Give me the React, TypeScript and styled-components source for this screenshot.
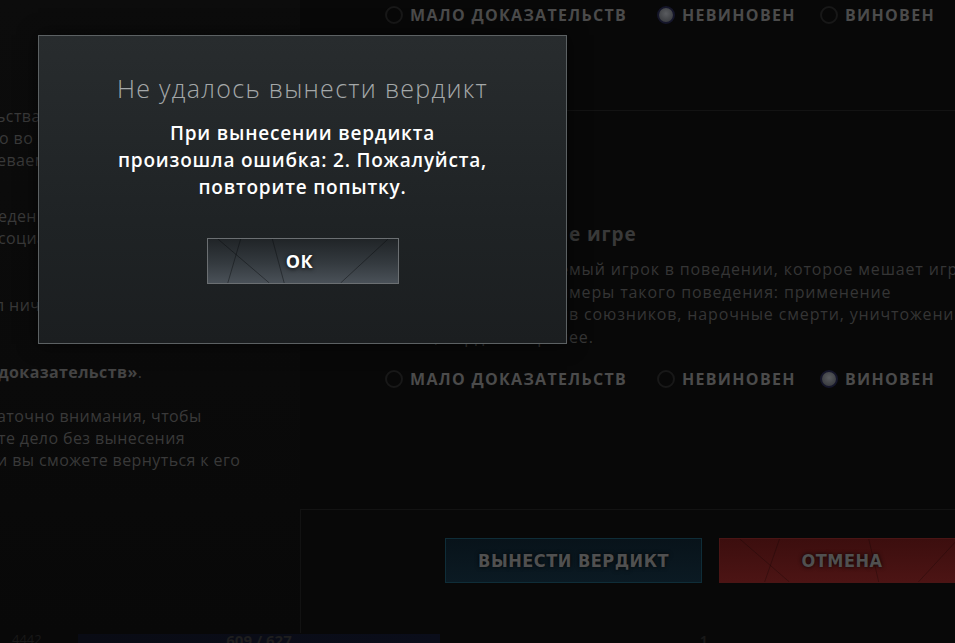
import React from 'react';
import styled, { createGlobalStyle } from 'styled-components';

const GlobalStyle = createGlobalStyle`
  html, body {
    margin: 0;
    padding: 0;
    background: #080808;
  }
`;

const Page = styled.div`
  position: relative;
  width: 955px;
  height: 643px;
  overflow: hidden;
  display: flex;
  flex-direction: column;
  background: #080808;
  font-family: "Open Sans", "Noto Sans", sans-serif;
`;

const Main = styled.div`
  display: flex;
  height: 633px;
  flex-shrink: 0;
`;

const LeftColumn = styled.div`
  width: 300px;
  flex-shrink: 0;
  padding-top: 105px;
  box-sizing: border-box;
  overflow: hidden;
  background: linear-gradient(180deg, #0c0c0c 0%, #0a0a0a 60%, #080808 100%);
`;

const LeftParagraph = styled.div<{ space: number }>`
  margin-top: ${({ space }) => space}px;
  font-size: 16px;
  line-height: 22px;
  letter-spacing: 0.4px;
  color: #393939;
  white-space: nowrap;
`;

const LeftLine = styled.div<{ shift: number }>`
  margin-left: ${({ shift }) => shift}px;
`;

const Strong = styled.b`
  font-weight: 700;
  color: #444;
`;

const RightColumn = styled.div`
  flex: 1;
  display: flex;
  flex-direction: column;
  min-width: 0;
`;

const RadioRow = styled.div<{ space: number }>`
  display: flex;
  align-items: center;
  height: 30px;
  margin-top: ${({ space }) => space}px;
  padding-left: 85px;
`;

const RadioItem = styled.div<{ width: number }>`
  display: flex;
  align-items: center;
  width: ${({ width }) => width}px;
  flex-shrink: 0;
`;

const RadioCircle = styled.span<{ checked?: boolean }>`
  width: 18px;
  height: 18px;
  border-radius: 50%;
  box-sizing: border-box;
  margin-right: 7px;
  border: 2px solid ${({ checked }) => (checked ? '#15162a' : '#181818')};
  background: ${({ checked }) =>
    checked ? 'radial-gradient(circle at 50% 40%, #5a5c60 0%, #3d3f43 70%)' : 'transparent'};
`;

const RadioLabel = styled.span`
  font-size: 16px;
  font-weight: 700;
  letter-spacing: 1.3px;
  color: #4b4b4b;
  white-space: nowrap;
`;

const Divider = styled.div<{ space: number }>`
  height: 1px;
  margin-top: ${({ space }) => space}px;
  background: #131313;
  flex-shrink: 0;
`;

const Question = styled.div`
  margin-top: 109px;
  padding-left: 85px;
  white-space: nowrap;
`;

const QuestionTitle = styled.div`
  display: flex;
  font-size: 19px;
  font-weight: 700;
  line-height: 28px;
  letter-spacing: 0.9px;
  color: #393939;
`;

const QuestionText = styled.div`
  margin-top: 10px;
  font-size: 16px;
  line-height: 22.7px;
  color: #353535;
  letter-spacing: 0.85px;
`;

const QuestionLine = styled.div`
  display: flex;
`;

/* start of each line, kept under the dialog */
const Lead = styled.span`
  width: 184px;
  flex-shrink: 0;
  display: flex;
  justify-content: flex-end;
  overflow: hidden;
`;

const Footer = styled.div`
  flex: 1;
  border-left: 1px solid #121212;
  padding-top: 28px;
  padding-left: 144px;
  display: flex;
  align-items: flex-start;
  gap: 17px;
`;

const VerdictButton = styled.button<{ tone: 'blue' | 'red'; width: number }>`
  position: relative;
  flex-shrink: 0;
  width: ${({ width }) => width}px;
  height: 45px;
  box-sizing: border-box;
  overflow: hidden;
  border: 1px solid ${({ tone }) => (tone === 'blue' ? '#0f2d38' : '#4a1515')};
  background: ${({ tone }) =>
    tone === 'blue'
      ? 'linear-gradient(180deg, #08131a 0%, #0b1a23 100%)'
      : 'linear-gradient(180deg, #3c0e0e 0%, #4c1414 100%)'};
  font-family: "DejaVu Sans Condensed", "DejaVu Sans", sans-serif;
  font-size: 18px;
  font-weight: 700;
  letter-spacing: 0.5px;
  color: #505050;
  text-shadow: 0 0 4px rgba(0, 0, 0, 0.9);
  padding: 0;
`;

const ButtonLabel = styled.span`
  position: relative;
`;

const Streaks = styled.svg`
  position: absolute;
  inset: 0;
  width: 100%;
  height: 100%;
`;

const BottomStrip = styled.div`
  display: flex;
  align-items: flex-start;
  height: 30px;
  flex-shrink: 0;
  padding-left: 12px;
  font-size: 13px;
  color: #181818;
`;

const Counter = styled.span`
  width: 66px;
  line-height: 12px;
`;

const ProgressTrack = styled.div`
  width: 362px;
  height: 14px;
  margin-top: 1px;
  background: linear-gradient(90deg, #090b14 0%, #0a0d1a 100%);
  display: flex;
  justify-content: center;
  font-size: 15px;
  font-weight: 700;
  line-height: 12px;
  color: #1e1e1e;
`;

const PageNumber = styled.span`
  margin-left: 260px;
  font-weight: 700;
  line-height: 14px;
`;

const Dialog = styled.div`
  position: absolute;
  top: 35px;
  left: 38px;
  width: 529px;
  height: 309px;
  box-sizing: border-box;
  border: 1px solid #5c6163;
  background: linear-gradient(180deg, #282c2e 0%, #1f2325 60%, #1b1e20 100%);
  display: flex;
  flex-direction: column;
  align-items: center;
  padding-top: 35px;
  box-shadow: 0 0 18px rgba(0, 0, 0, 0.6);
`;

const DialogTitle = styled.div`
  font-size: 25px;
  font-weight: 300;
  line-height: 34px;
  letter-spacing: 1.3px;
  color: #a4a8a9;
`;

const DialogMessage = styled.div`
  margin-top: 15px;
  text-align: center;
  font-size: 19px;
  font-weight: 600;
  line-height: 27px;
  letter-spacing: 0.8px;
  color: #ffffff;
  white-space: nowrap;
`;

const OkButton = styled.button`
  position: relative;
  margin-top: 37px;
  width: 192px;
  height: 46px;
  box-sizing: border-box;
  overflow: hidden;
  border: 1px solid #6b6f72;
  background: linear-gradient(180deg, #202427 0%, #343a3f 55%, #4a5158 100%);
  font-family: "Open Sans", "Noto Sans", sans-serif;
  font-size: 18px;
  font-weight: 700;
  letter-spacing: 0.6px;
  color: #ffffff;
  text-shadow: 0 1px 4px rgba(0, 0, 0, 0.9);
  padding: 0 6px 0 0;
`;

const okLines = [
  [10, 0, 62, 46],
  [33, 0, 20, 46],
  [65, 0, 77, 46],
  [182, 0, 134, 46],
];

const redLines = [
  [20, 0, 70, 46],
  [60, 0, 45, 46],
  [150, 0, 160, 46],
  [240, 0, 200, 46],
];

const questionLines = [
  ['Участвует ли обвиняе', 'мый игрок в поведении, которое мешает игре'],
  ['своих союзников? При', 'меры такого поведения: применение'],
  ['способностей проти', 'в союзников, нарочные смерти, уничтожение'],
  ['предметов, вардов и проч', 'ее.'],
];

const App: React.FC = () => {
  return (
    <>
      <GlobalStyle />
      <Page>
        <Main>
          <LeftColumn>
            <LeftParagraph space={0}>
              <LeftLine shift={-4}>ьства нарушения, которые вы видите</LeftLine>
              <LeftLine shift={-1}>о во время матча, и решите, было</LeftLine>
              <LeftLine shift={-3}>еваемого нарушением правил</LeftLine>
            </LeftParagraph>
            <LeftParagraph space={34}>
              <LeftLine shift={-2}>едения игрока, которое можно</LeftLine>
              <LeftLine shift={-2}>социальным, выберите</LeftLine>
            </LeftParagraph>
            <LeftParagraph space={45}>
              <LeftLine shift={-5}>л ничего не нарушил</LeftLine>
            </LeftParagraph>
            <LeftParagraph space={45}>
              <LeftLine shift={-2}>
                <Strong>доказательств»</Strong>.
              </LeftLine>
            </LeftParagraph>
            <LeftParagraph space={22}>
              <LeftLine shift={-3}>аточно внимания, чтобы</LeftLine>
              <LeftLine shift={-2}>те дело без вынесения</LeftLine>
              <LeftLine shift={-3}>и вы сможете вернуться к его</LeftLine>
            </LeftParagraph>
          </LeftColumn>

          <RightColumn>
            <RadioRow space={0}>
              <RadioItem width={272}>
                <RadioCircle />
                <RadioLabel>МАЛО ДОКАЗАТЕЛЬСТВ</RadioLabel>
              </RadioItem>
              <RadioItem width={163}>
                <RadioCircle checked />
                <RadioLabel>НЕВИНОВЕН</RadioLabel>
              </RadioItem>
              <RadioItem width={120}>
                <RadioCircle />
                <RadioLabel>ВИНОВЕН</RadioLabel>
              </RadioItem>
            </RadioRow>

            <Divider space={80} />

            <Question>
              <QuestionTitle>
                <Lead>Противодействи</Lead>
                <span>е игре</span>
              </QuestionTitle>
              <QuestionText>
                {questionLines.map(([lead, rest]) => (
                  <QuestionLine key={rest}>
                    <Lead>{lead}</Lead>
                    <span>{rest}</span>
                  </QuestionLine>
                ))}
              </QuestionText>
            </Question>

            <RadioRow space={15}>
              <RadioItem width={272}>
                <RadioCircle />
                <RadioLabel>МАЛО ДОКАЗАТЕЛЬСТВ</RadioLabel>
              </RadioItem>
              <RadioItem width={163}>
                <RadioCircle />
                <RadioLabel>НЕВИНОВЕН</RadioLabel>
              </RadioItem>
              <RadioItem width={120}>
                <RadioCircle checked />
                <RadioLabel>ВИНОВЕН</RadioLabel>
              </RadioItem>
            </RadioRow>

            <Divider space={115} />

            <Footer>
              <VerdictButton tone="blue" width={257}>
                <ButtonLabel>ВЫНЕСТИ ВЕРДИКТ</ButtonLabel>
              </VerdictButton>
              <VerdictButton tone="red" width={246}>
                <Streaks viewBox="0 0 246 46" preserveAspectRatio="none">
                  {redLines.map(([x1, y1, x2, y2], i) => (
                    <line key={i} x1={x1} y1={y1} x2={x2} y2={y2} stroke="rgba(0,0,0,0.25)" strokeWidth="1" />
                  ))}
                </Streaks>
                <ButtonLabel>ОТМЕНА</ButtonLabel>
              </VerdictButton>
            </Footer>
          </RightColumn>
        </Main>

        <BottomStrip>
          <Counter>4442</Counter>
          <ProgressTrack>609 / 627</ProgressTrack>
          <PageNumber>1</PageNumber>
        </BottomStrip>

        <Dialog>
          <DialogTitle>Не удалось вынести вердикт</DialogTitle>
          <DialogMessage>
            При вынесении вердикта
            <br />
            произошла ошибка: 2. Пожалуйста,
            <br />
            повторите попытку.
          </DialogMessage>
          <OkButton>
            <Streaks viewBox="0 0 192 46" preserveAspectRatio="none">
              {okLines.map(([x1, y1, x2, y2], i) => (
                <line key={i} x1={x1} y1={y1} x2={x2} y2={y2} stroke="rgba(10,12,14,0.45)" strokeWidth="1" />
              ))}
            </Streaks>
            <ButtonLabel>ОК</ButtonLabel>
          </OkButton>
        </Dialog>
      </Page>
    </>
  );
};

export default App;
